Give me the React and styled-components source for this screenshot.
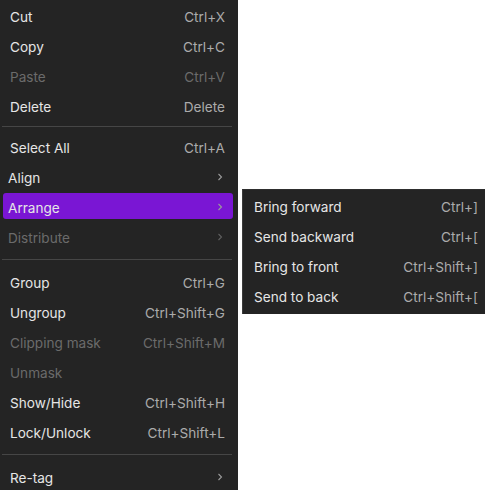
import React from 'react';
import styled, { createGlobalStyle } from 'styled-components';

const GlobalStyle = createGlobalStyle`
  html, body {
    margin: 0;
    padding: 0;
    background: #ffffff;
    overflow: hidden;
  }
  body {
    font-family: Inter, "Liberation Sans", sans-serif;
  }
`;

const Menu = styled.div`
  position: relative;
  width: 238px;
  height: 490px;
  background: #242424;
  padding-top: 1px;
  box-sizing: border-box;
  font-size: 13.6px;
`;

const Row = styled.div`
  position: relative;
  height: 30px;
  box-sizing: border-box;
  display: flex;
  align-items: center;
  justify-content: space-between;
  padding: 2px 13px 0 ${p => (p.$sub ? 8 : 10)}px;
  color: ${p => (p.$disabled ? '#6b6b6b' : '#e6e6e6')};
  cursor: default;
`;

const Highlight = styled.div`
  position: absolute;
  left: 3px;
  right: 5px;
  top: 1px;
  bottom: 3px;
  background: #7a16d4;
  border-radius: 3px;
`;

const Label = styled.span`
  position: relative;
  white-space: nowrap;
`;

const Shortcut = styled.span`
  position: relative;
  color: ${p => (p.$disabled ? '#6b6b6b' : '#ababab')};
  white-space: nowrap;
`;

const Chevron = styled.svg`
  position: relative;
  width: 6px;
  height: 8px;
  margin-right: 2px;
  margin-top: -2px;
`;

const Separator = styled.div`
  height: 1px;
  background: #464646;
  margin: ${p => p.$gap}px 6px ${p => p.$gap}px 2px;
`;

const SubMenu = styled.div`
  position: absolute;
  left: calc(100% + 4px);
  top: -3px;
  width: 243px;
  padding: 1px 0 3px;
  background: #242424;
  border-left: 1px solid #3c3c3c;
  border-top: 1px solid #2e2e2e;
  box-sizing: border-box;
  z-index: 2;
`;

const SubRow = styled.div`
  height: 30px;
  box-sizing: border-box;
  display: flex;
  align-items: center;
  justify-content: space-between;
  padding: 1px 7px 0 11px;
  color: #e6e6e6;
`;

const Arrow = ({ disabled }) => (
  <Chevron viewBox="0 0 6 8">
    <path d="M1.5 1 L4.5 4 L1.5 7" fill="none" stroke={disabled ? '#5f5f5f' : '#9a9a9a'} strokeWidth="1.1" />
  </Chevron>
);

const arrangeItems = [
  ['Bring forward', 'Ctrl+]'],
  ['Send backward', 'Ctrl+['],
  ['Bring to front', 'Ctrl+Shift+]'],
  ['Send to back', 'Ctrl+Shift+['],
];

const Item = ({ label, shortcut, disabled }) => (
  <Row $disabled={disabled}>
    <Label>{label}</Label>
    {shortcut && <Shortcut $disabled={disabled}>{shortcut}</Shortcut>}
  </Row>
);

export default function App() {
  return (
    <>
      <GlobalStyle />
      <Menu>
        <Item label="Cut" shortcut="Ctrl+X" />
        <Item label="Copy" shortcut="Ctrl+C" />
        <Item label="Paste" shortcut="Ctrl+V" disabled />
        <Item label="Delete" shortcut="Delete" />
        <Separator $gap={5} />
        <Item label="Select All" shortcut="Ctrl+A" />
        <Row $sub>
          <Label>Align</Label>
          <Arrow />
        </Row>
        <Row $sub>
          <Highlight />
          <Label>Arrange</Label>
          <Arrow />
          <SubMenu>
            {arrangeItems.map(([l, s]) => (
              <SubRow key={l}>
                <span>{l}</span>
                <Shortcut>{s}</Shortcut>
              </SubRow>
            ))}
          </SubMenu>
        </Row>
        <Row $sub $disabled>
          <Label>Distribute</Label>
          <Arrow disabled />
        </Row>
        <Separator $gap={7} />
        <Item label="Group" shortcut="Ctrl+G" />
        <Item label="Ungroup" shortcut="Ctrl+Shift+G" />
        <Item label="Clipping mask" shortcut="Ctrl+Shift+M" disabled />
        <Item label="Unmask" disabled />
        <Item label="Show/Hide" shortcut="Ctrl+Shift+H" />
        <Item label="Lock/Unlock" shortcut="Ctrl+Shift+L" />
        <Separator $gap={7} />
        <Row>
          <Label>Re-tag</Label>
          <Arrow />
        </Row>
      </Menu>
    </>
  );
}
